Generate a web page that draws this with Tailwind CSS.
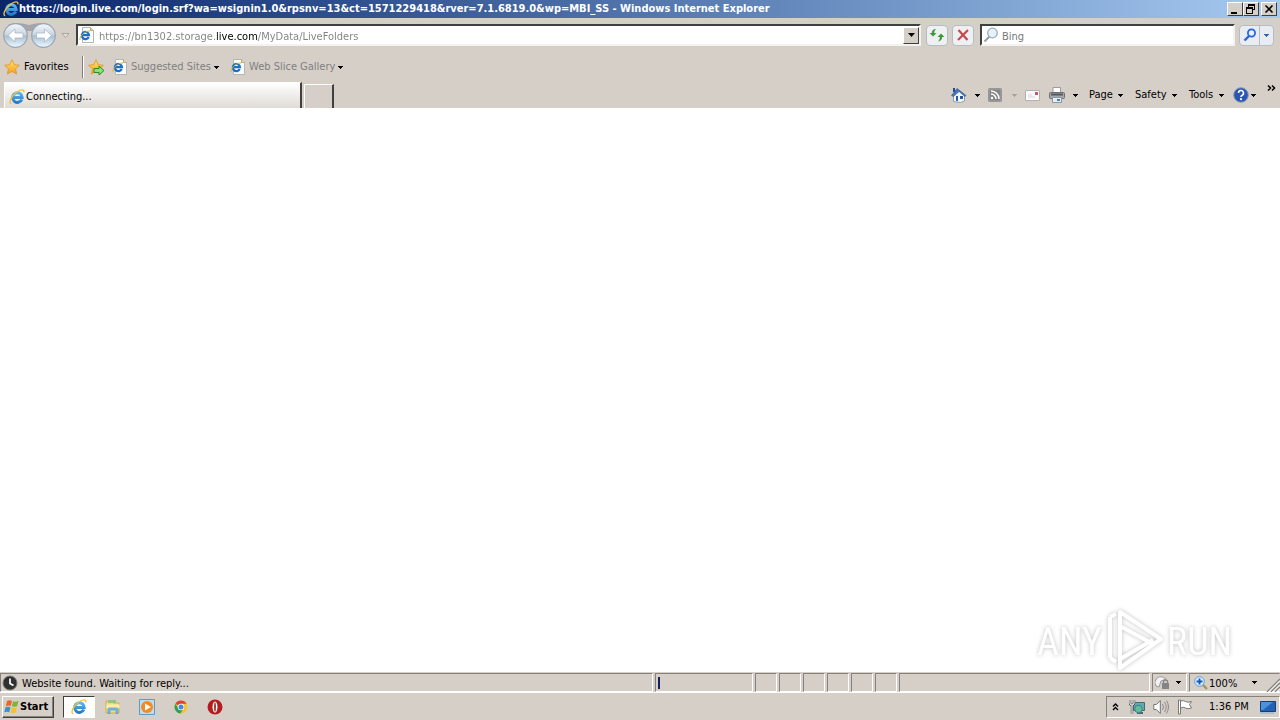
<!DOCTYPE html>
<html lang="en">
<head>
<meta charset="utf-8">
<title>Windows Internet Explorer</title>
<script src="https://cdn.jsdelivr.net/npm/@tailwindcss/browser@4"></script>
</head>
<body class="flex h-screen flex-col overflow-hidden bg-[#d6cfc8] font-['Tahoma','DejaVu_Sans_Condensed','DejaVu_Sans',sans-serif] text-[11px] leading-4 text-black">
<svg class="absolute size-0" aria-hidden="true">
  <defs>
    <linearGradient id="ieBlue" x1="0" y1="0" x2="0" y2="16" gradientUnits="userSpaceOnUse"><stop offset="0" stop-color="#6cd0fa"/><stop offset="1" stop-color="#1b6ac4"/></linearGradient>
    <linearGradient id="orb" x1="0" y1="0" x2="0" y2="1"><stop offset="0" stop-color="#f4f7fa"/><stop offset=".45" stop-color="#cbd7e2"/><stop offset=".52" stop-color="#a9bfd4"/><stop offset="1" stop-color="#eef9ff"/></linearGradient>
    <linearGradient id="gold" x1="0" y1="0" x2="0" y2="1"><stop offset="0" stop-color="#ffe873"/><stop offset="1" stop-color="#f79a1c"/></linearGradient>
    <symbol id="ie" viewBox="0 0 16 16">
      <path d="M12.800 10.500A4.800 4.800 0 1 1 13.200 8.500H4.500" fill="none" stroke="url(#ieBlue)" stroke-width="3"/>
      <path d="M2.200 14.800C-1.200 13.600 3 6.500 7.500 3.200 11.500.3 15.600-.2 14.800 3.300" fill="none" stroke="#f3c22e" stroke-width="1.400"/>
    </symbol>
    <symbol id="iepage" viewBox="0 0 16 16">
      <path d="M3.500.5h8l3 3v12h-11z" fill="#fdfdfb" stroke="#b3b5b6"/>
      <path d="M11.500.5v3h3" fill="#e8d9a0" stroke="#b5a878"/>
      <path d="M9.700 10A3.600 3.600 0 1 1 10 8.200H4" fill="none" stroke="#1d6fc4" stroke-width="2.200"/>
      <path d="M1 13C0 10 6 3.500 11 4" fill="none" stroke="#e5b62b"/>
    </symbol>
    <symbol id="star" viewBox="0 0 16 16"><path d="M8 .8l2.200 4.900 5.200.6-3.900 3.500 1.100 5.200L8 12.400 3.400 15l1.100-5.200L.6 6.300l5.200-.6z" fill="url(#gold)" stroke="#e0a030"/></symbol>
    <symbol id="down" viewBox="0 0 5 3"><path d="M0 0h5v1H4v1H3v1H2V2H1V1H0z" fill="currentColor"/></symbol>
  </defs>
</svg>

<header class="flex h-[18px] shrink-0 items-center bg-linear-to-r from-[#0a246a] to-[#a6caf0] pr-[3px] pl-[3px] text-white">
  <svg class="size-4 shrink-0"><use href="#ie"/></svg>
  <h1 class="min-w-0 flex-1 truncate text-[11px] font-bold">https://login.live.com/login.srf?wa=wsignin1.0&amp;rpsnv=13&amp;ct=1571229418&amp;rver=7.1.6819.0&amp;wp=MBI_SS - Windows Internet Explorer</h1>
  <div class="flex text-black">
    <button aria-label="Minimize" class="h-[14px] w-4 border border-t-white border-r-[#404040] border-b-[#404040] border-l-white bg-[#d4d0c8]"><svg class="size-full" viewBox="0 0 14 12"><path d="M3 9h6v2H3z"/></svg></button>
    <button aria-label="Restore" class="h-[14px] w-4 border border-t-white border-r-[#404040] border-b-[#404040] border-l-white bg-[#d4d0c8]"><svg class="size-full" viewBox="0 0 14 12"><path d="M4 1h7v6H9v4H2V4h2zM5 3v1h4v2h1V3zM3 6v4h5V6z" fill-rule="evenodd"/></svg></button>
    <button aria-label="Close" class="ml-0.5 h-[14px] w-4 border border-t-white border-r-[#404040] border-b-[#404040] border-l-white bg-[#d4d0c8]"><svg class="size-full" viewBox="0 0 14 12"><path d="M3.500 2.500l7 7m0-7l-7 7" stroke="#000" stroke-width="1.600"/></svg></button>
  </div>
</header>

<form class="flex h-[34px] shrink-0 items-center pr-1.5 pl-[2px]">
  <div class="flex w-[55px] shrink-0 rounded-full">
    <button type="button" aria-label="Back" class="h-7 w-[27px]"><svg class="h-7 w-[27px]" viewBox="0 0 27 28"><path d="M6 4Q13 0 27 4v6H13z" fill="#a5a5aa"/><circle cx="13.500" cy="14.500" r="11.800" fill="url(#orb)" stroke="#97a5b4" stroke-width="1.200"/><path d="M6 14.500L13 8v4h8v5h-8v4z" fill="#fff" stroke="#a8b6c6" stroke-width=".8"/></svg></button>
    <button type="button" aria-label="Forward" class="h-7 w-7"><svg class="h-7 w-7" viewBox="0 0 28 28"><path d="M0 4Q14 0 21 4l-7 6H0z" fill="#a5a5aa"/><circle cx="14.500" cy="14.500" r="11.800" fill="url(#orb)" stroke="#97a5b4" stroke-width="1.200"/><path d="M22.500 14.500L15.500 8v4h-8v5h8v4z" fill="#fff" stroke="#a8b6c6" stroke-width=".8"/></svg></button>
  </div>
  <button type="button" aria-label="Recent pages" class="w-[19px] shrink-0 pl-1"><svg class="h-[5px] w-[9px]" viewBox="0 0 9 5"><path d="M1 .5h7L4.500 4.500z" fill="#e4e0db" stroke="#aaa59e"/></svg></button>
  <div class="flex h-[22px] min-w-0 flex-1 items-center border-2 border-t-[#404040] border-r-[#f4f2ee] border-b-[#f4f2ee] border-l-[#404040] bg-white pl-px">
    <svg class="size-4 shrink-0"><use href="#iepage"/></svg>
    <input aria-label="Address" value="https://bn1302.storage.live.com/MyData/LiveFolders" class="ml-1 h-[18px] min-w-0 flex-1 bg-[linear-gradient(90deg,#808080_117px,#000_117px,#000_159px,#808080_159px)] bg-clip-text pt-0.5 text-transparent outline-none">
    <button type="button" aria-label="Show address list" class="flex h-[17px] w-4 items-center justify-center border border-t-white border-r-[#404040] border-b-[#404040] border-l-white bg-[#d4d0c8]"><svg class="h-1 w-[7px]" viewBox="0 0 7 4"><path d="M0 0h7L3.500 4z"/></svg></button>
  </div>
  <button type="button" aria-label="Refresh" class="ml-[5px] flex h-[21px] w-[22px] shrink-0 items-center justify-center rounded-sm border border-[#b5bcc5] bg-[#eef0f1]"><svg class="size-4" viewBox="0 0 16 16" fill="#399d35"><path d="M.5 6L4 9.500 7.500 6H5.200c0-2 .6-3 2-4C4.500 2 2.800 3.500 2.800 6zM8.500 10L12 6.500 15.500 10h-2.300c0 2.500-1.500 4.200-4.400 4.500 1.400-1 2-2.300 2-4.500z"/></svg></button>
  <button type="button" aria-label="Stop" class="ml-1 flex h-[21px] w-[22px] shrink-0 items-center justify-center rounded-sm border border-[#b5bcc5] bg-[#eef0f1]"><svg class="size-4" viewBox="0 0 16 16"><path d="M3.500 3l9 10M13 3L3 13" stroke="#c9474b" stroke-width="2.200"/></svg></button>
  <div class="ml-1.5 flex h-[22px] w-[255px] shrink-0 items-center border-2 border-t-[#404040] border-r-[#f4f2ee] border-b-[#f4f2ee] border-l-[#404040] bg-white pl-px">
    <svg class="size-4 shrink-0" viewBox="0 0 16 16"><path d="M6.500 9.500L1.500 14.500" stroke="#9a9fa8" stroke-width="2.200"/><circle cx="9.500" cy="6" r="4.800" fill="#e5f2fb" stroke="#9dacbd" stroke-width="1.300"/></svg>
    <input aria-label="Search" placeholder="Bing" class="ml-[3px] h-[18px] min-w-0 flex-1 pt-0.5 outline-none placeholder:text-[#777]">
  </div>
  <div class="ml-1 flex h-[21px] w-[35px] shrink-0 rounded-sm border border-[#b5bcc5] bg-[#e9edf2]">
    <button aria-label="Run search" class="flex w-5 items-center justify-center border-r border-[#b5bcc5]"><svg class="size-[14px]" viewBox="0 0 14 14"><path d="M6 8L1.500 12.500" stroke="#2866d8" stroke-width="2.400"/><circle cx="8.500" cy="5" r="3.600" fill="#e6f0fc" stroke="#2866d8" stroke-width="1.800"/></svg></button>
    <button type="button" aria-label="Search options" class="flex flex-1 items-center justify-center text-[#2866b8]"><svg class="h-[3px] w-[5px]"><use href="#down"/></svg></button>
  </div>
</form>

<nav aria-label="Favorites" class="flex h-[30px] shrink-0 items-center pl-1 text-[#808080]">
  <button class="flex w-[78px] items-center gap-1 text-black"><svg class="size-4"><use href="#star"/></svg>Favorites</button>
  <span class="h-[22px] w-[6px] border-l border-[#807c76] shadow-[inset_1px_0_0_#fff]"></span>
  <button aria-label="Add to Favorites bar" class="w-6"><svg class="size-4" viewBox="0 0 16 16"><use href="#star"/><path d="M6 9.500h5V7l5 4.500-5 4.500v-2.500H6z" fill="#8ee070" stroke="#288c26"/></svg></button>
  <button class="flex w-[118px] items-center gap-[3px] whitespace-nowrap"><svg class="size-4 shrink-0"><use href="#iepage"/></svg>Suggested Sites<svg class="mr-3 ml-auto h-[3px] w-[5px] shrink-0 text-black"><use href="#down"/></svg></button>
  <button class="flex items-center gap-[3px] whitespace-nowrap"><svg class="size-4 shrink-0"><use href="#iepage"/></svg>Web Slice Gallery<svg class="h-[3px] w-[5px] shrink-0 text-black"><use href="#down"/></svg></button>
</nav>

<div class="flex h-[26px] shrink-0 items-end pl-1">
  <button class="flex h-[26px] w-[298px] items-center border-t border-r-2 border-l border-t-white border-r-[#404040] border-l-white bg-linear-to-b from-white to-[#dfdbd6] pt-0.5 pl-1"><svg class="size-4"><use href="#ie"/></svg><span class="pl-px">Connecting...</span></button>
  <button aria-label="New tab" class="ml-0.5 h-6 w-[30px] border-t border-r-2 border-l border-t-white border-r-[#404040] border-l-white"></button>
  <div class="ml-auto flex h-full items-center">
    <button aria-label="Home" class="flex w-[37px] items-center"><svg class="size-4 shrink-0" viewBox="0 0 16 16"><path d="M2.500 8v6.500l7 1 4-1.500V8L8 3z" fill="#f2f6fa" stroke="#8ba0b4"/><path d="M.5 8.500L6 1.500l9 7-1 1-6-5-5.500 5z" fill="#4577b5" stroke="#28548c" stroke-width=".6"/><path d="M2 1h2v4H2z" fill="#26489a"/><path d="M5 9h2v5l-2-.2zM9 9h3v3H9z" fill="#24589b"/></svg><svg class="mr-2 ml-auto h-[3px] w-[5px] shrink-0"><use href="#down"/></svg></button>
    <button aria-label="Feeds" class="flex w-[37px] items-center"><svg class="size-[14px]" viewBox="0 0 14 14"><rect width="14" height="14" rx="2" fill="#858585"/><rect x="1" y="1" width="12" height="12" fill="none" stroke="#a7a7a7"/><path d="M3 6a5 5 0 0 1 5 5M3 3a8 8 0 0 1 8 8" fill="none" stroke="#fff" stroke-width="1.500"/><circle cx="4" cy="10" r="1.200" fill="#fff"/></svg><svg class="mr-2 ml-auto h-[3px] w-[5px] text-[#aaa49d]"><use href="#down"/></svg></button>
    <button aria-label="Read mail" class="w-6"><svg class="h-[11px] w-[15px]" viewBox="0 0 15 11"><path d="M.5.5h14v10H.5z" fill="#fbfafb" stroke="#b4afb0"/><path d="M10 2h3v3h-3z" fill="#c55a60"/><path d="M3 5h4M3 7h7" stroke="#d2d5dd"/></svg></button>
    <button aria-label="Print" class="flex w-10 items-center"><svg class="size-4" viewBox="0 0 16 16"><path d="M4 .5h7.500v6H4z" fill="#fff" stroke="#9b9b9b"/><rect x=".5" y="5.500" width="15" height="6" rx="1" fill="#a6a8ad" stroke="#6b6e73"/><path d="M2 7.500h12" stroke="#53565b" stroke-width="2"/><path d="M3.500 10.500h9v5h-9z" fill="#e5f0fb" stroke="#8a95a0"/><path d="M8 13h3" stroke="#3884bf" stroke-width="2"/></svg><svg class="mr-[11px] ml-auto h-[3px] w-[5px] shrink-0"><use href="#down"/></svg></button>
    <button class="flex w-[46px] items-center justify-between pr-3">Page<svg class="h-[3px] w-[5px] shrink-0"><use href="#down"/></svg></button>
    <button class="flex w-[54px] items-center justify-between pr-3">Safety<svg class="h-[3px] w-[5px] shrink-0"><use href="#down"/></svg></button>
    <button class="flex w-11 items-center justify-between pr-[9px]">Tools<svg class="h-[3px] w-[5px] shrink-0"><use href="#down"/></svg></button>
    <button aria-label="Help" class="flex w-[34px] items-center gap-0.5"><svg class="size-4 shrink-0" viewBox="0 0 16 16"><circle cx="8" cy="8" r="7.300" fill="#2b55b5" stroke="#8b9bb8"/><path d="M5.500 6a2.500 2.500 0 1 1 3.700 2.200C8.200 8.700 8 9 8 10" fill="none" stroke="#fff" stroke-width="1.600"/><circle cx="8" cy="12.200" r="1.100" fill="#fff"/></svg><svg class="h-[3px] w-[5px] shrink-0"><use href="#down"/></svg></button>
    <button aria-label="More commands" class="flex h-full w-[13px] items-start pt-[3px]"><svg class="h-[6px] w-[9px]" viewBox="0 0 9 6"><path d="M1 .5L3.500 3 1 5.500M5 .5L7.500 3 5 5.500" fill="none" stroke="#000" stroke-width="1.500"/></svg></button>
  </div>
</div>

<main class="relative min-h-0 flex-1 bg-white">
  <svg role="img" aria-label="ANY RUN" class="absolute right-[42px] -bottom-0.5 h-[68px] w-[204px] drop-shadow-[0_0_2px_#00000040]" viewBox="0 0 204 68">
    <g fill="#fff" font-family="'Roboto Condensed','Open Sans Condensed',Roboto,sans-serif" font-size="38">
      <text x="3" y="49">ANY</text><text x="133" y="49">RUN</text>
    </g>
    <path d="M86 6l41 27-41 29zM86 20l33 18M76 11v41M86 53l33-19M76 11l6-3M76 52l6 4" fill="none" stroke="#fff" stroke-width="4" stroke-linejoin="round"/>
  </svg>
</main>

<footer class="relative flex h-5 shrink-0 gap-0.5 border-t border-[#d6cfc8]">
  <div role="status" class="flex min-w-0 flex-1 items-center gap-1 border border-t-[#85817b] border-r-white border-b-white border-l-[#85817b] pl-px"><svg class="size-4" viewBox="0 0 16 16"><circle cx="8" cy="8" r="7" fill="#303030" stroke="#777"/><path d="M8 3.500v5l3.500 2" fill="none" stroke="#fff" stroke-width="1.700"/></svg><span class="pt-0.5">Website found. Waiting for reply...</span></div>
  <div class="flex w-[98px] items-center border border-t-[#85817b] border-r-white border-b-white border-l-[#85817b] pl-0.5"><div role="progressbar" aria-label="Page loading" class="h-3 w-0.5 bg-[#152060]"></div></div>
  <div class="w-[22px] border border-t-[#85817b] border-r-white border-b-white border-l-[#85817b]"></div>
  <div class="w-[22px] border border-t-[#85817b] border-r-white border-b-white border-l-[#85817b]"></div>
  <div class="w-[22px] border border-t-[#85817b] border-r-white border-b-white border-l-[#85817b]"></div>
  <div class="w-[22px] border border-t-[#85817b] border-r-white border-b-white border-l-[#85817b]"></div>
  <div class="w-[22px] border border-t-[#85817b] border-r-white border-b-white border-l-[#85817b]"></div>
  <div class="w-[22px] border border-t-[#85817b] border-r-white border-b-white border-l-[#85817b]"></div>
  <div class="w-[251px] border border-t-[#85817b] border-r-white border-b-white border-l-[#85817b]"></div>
  <button aria-label="Protected mode" class="flex w-[35px] items-center border border-t-[#85817b] border-r-white border-b-white border-l-[#85817b] pl-0.5"><svg class="size-4 shrink-0" viewBox="0 0 16 16"><path d="M1 11A6 6 0 0 1 8 2l3 2-5 2-2 6z" fill="#f2f2f2" stroke="#999"/><rect x="7" y="8" width="7" height="6" fill="#858585"/><path d="M8.500 8V6q2-2 4 0v2" fill="none" stroke="#858585" stroke-width="1.300"/></svg><svg class="ml-[5px] h-[3px] w-[5px] shrink-0"><use href="#down"/></svg></button>
  <button class="flex w-[91px] items-center border border-t-[#85817b] border-r-transparent border-b-white border-l-[#85817b] pl-1"><svg class="size-[14px]" viewBox="0 0 14 14"><path d="M8 8l5 5" stroke="#ae9256" stroke-width="2.400"/><circle cx="5.500" cy="5.500" r="4.800" fill="#dff0ff" stroke="#6198d0"/><path d="M5.500 2.500v6M2.500 5.500h6" stroke="#155bb8" stroke-width="2"/></svg><span class="pt-0.5 pl-px">100%</span><svg class="mr-[22px] ml-auto h-[3px] w-[5px]"><use href="#down"/></svg></button>
  <svg class="absolute right-0 bottom-0 size-[14px]" viewBox="0 0 14 14"><path d="M1 14L14 1M5 14l9-9M9 14l5-5" stroke="#85817b" stroke-width="1.500"/><path d="M2.500 14L14 2.500M6.500 14L14 6.500M10.500 14l3.500-3.500" stroke="#fff"/></svg>
</footer>

<nav aria-label="Taskbar" class="flex h-7 shrink-0 items-center border-t border-white pl-0.5">
  <button class="flex h-[22px] w-[52px] items-center border border-t-white border-r-[#404040] border-b-[#404040] border-l-white pl-px text-[11px] font-bold shadow-[inset_-1px_-1px_0_#85817b]"><svg class="size-4 shrink-0" viewBox="0 0 16 16"><path d="M3 2q2.500-1.500 5 0L6.800 7q-2.500-1-5 .2z" fill="#ee642c"/><path d="M9 2.300q3 1 5.500-.6L13.200 7q-2.500 1.500-5.300.3z" fill="#7bb43a"/><path d="M1.500 8.300q2.500-1.300 5 0l-1.200 5q-2.500-1.300-5 0z" fill="#3a8fd5"/><path d="M7.700 8.500q2.700 1.200 5.300-.3l-1.200 5q-2.500 1.500-5.300.4z" fill="#f4c12e"/></svg>Start</button>
  <button aria-label="Internet Explorer" class="ml-[9px] flex h-[22px] w-8 items-center justify-center border border-t-[#404040] border-r-white border-b-white border-l-[#404040] bg-white"><svg class="size-4"><use href="#ie"/></svg></button>
  <button aria-label="Windows Explorer" class="ml-[10px]"><svg class="size-4" viewBox="0 0 16 16"><path d="M1 2h6l1 2h6v10H1z" fill="#f5dc7a" stroke="#cfb04a"/><path d="M3 1h8v3H3z" fill="#8fc688"/><path d="M1.500 5.500h13v4h-13z" fill="#fbefac"/><path d="M3 14.500V10q0-1 1-1h8q1 0 1 1v4.500h-2V11H5v3.500z" fill="#81bfe9" stroke="#4c95c8" stroke-width=".7"/></svg></button>
  <button aria-label="Media Player" class="ml-[18px]"><svg class="size-4" viewBox="0 0 16 16"><path d="M.5.5h15v15H.5z" fill="#b9dff5" stroke="#5a9bce"/><circle cx="8" cy="8" r="6" fill="#f58b20"/><path d="M6 4.500l6 3.500-6 3.500z" fill="#fff"/></svg></button>
  <button aria-label="Chrome" class="ml-[18px]"><svg class="size-4" viewBox="0 0 16 16"><circle cx="8" cy="8" r="6.500" fill="#f6c52c"/><path d="M8 8L2.400 4.700A6.500 6.500 0 0 1 13.600 4.700H8z" fill="#dc4437"/><path d="M2.400 4.700A6.500 6.500 0 0 0 7.500 14.500L10.500 9.500 5 9z" fill="#2ca356"/><circle cx="8" cy="8" r="3.200" fill="#fff"/><circle cx="8" cy="8" r="2.500" fill="#4385e8"/></svg></button>
  <button aria-label="Opera" class="ml-[18px]"><svg class="size-4" viewBox="0 0 16 16"><circle cx="8" cy="8" r="7.500" fill="#b51c1d"/><ellipse cx="8" cy="8" rx="2.500" ry="5.500" fill="#fff"/><ellipse cx="8" cy="8" rx=".8" ry="4.800" fill="#8c1213"/></svg></button>
  <div class="ml-auto flex h-[22px] w-[174px] items-center border border-t-[#85817b] border-r-white border-b-white border-l-[#85817b] pl-[5px]">
    <button aria-label="Show hidden icons" class="w-[17px]"><svg class="h-2 w-[7px]" viewBox="0 0 7 8"><path d="M1 3.500L3.500 1 6 3.500M1 7L3.500 4.500 6 7" fill="none" stroke="#000" stroke-width="1.400"/></svg></button>
    <button aria-label="Network" class="w-6"><svg class="size-4" viewBox="0 0 16 16"><path d="M4.500 3.500h11v8h-11z" fill="#5eabb5" stroke="#4c6870"/><path d="M8 14h6" stroke="#4c6870" stroke-width="2"/><circle cx="9.500" cy="10" r="3.800" fill="#62bd94" stroke="#39839a"/><path d="M1 1v3q0 2 2 2t2-2V1M3 6v9" fill="none" stroke="#555" stroke-width="2.400"/><path d="M1 1v3q0 2 2 2t2-2V1M3 6v9" fill="none" stroke="#fff"/></svg></button>
    <button aria-label="Volume" class="w-6"><svg class="size-4" viewBox="0 0 16 16"><path d="M.8 5.500h2.500l4-4v13l-4-4H.8z" fill="#fff" stroke="#757575"/><path d="M9.500 5q2 3 0 6M11.500 3q3.500 5 0 10M13.500 1.500q4 6.500 0 13" fill="none" stroke="#8c8c8c"/></svg></button>
    <button aria-label="Action Center" class="w-7"><svg class="size-4" viewBox="0 0 16 16"><path d="M3.500 2q3-1 5 .5t6 0l-2 3 2 3.500q-4 1.500-6 0t-5 0z" fill="#fff" stroke="#777"/><path d="M1.500 1h2v14h-2z" fill="#fff" stroke="#777"/></svg></button>
    <time class="ml-1 w-[51px] whitespace-nowrap">1:36 PM</time>
    <button aria-label="Show desktop"><svg class="h-[14px] w-4" viewBox="0 0 16 14"><path d="M.5 1.500h15v10H.5z" fill="#2162b5" stroke="#173c78"/><path d="M1 2h12L3 10H1z" fill="#4b91dc"/><path d="M0 13h14" stroke="#7cadd7"/></svg></button>
  </div>
</nav>
</body>
</html>
